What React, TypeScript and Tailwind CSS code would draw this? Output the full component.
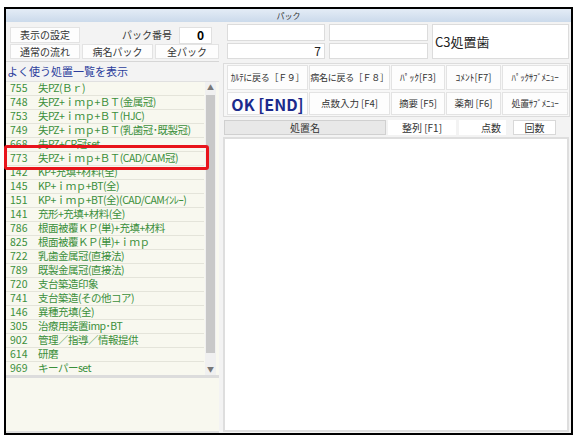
const items: [string, string][] = [
  ["755", "失PZ(Ｂｒ)"],
  ["748", "失PZ+ｉｍｐ+ＢＴ(金属冠)"],
  ["753", "失PZ+ｉｍｐ+ＢＴ(HJC)"],
  ["749", "失PZ+ｉｍｐ+ＢＴ(乳歯冠･既製冠)"],
  ["668", "失PZ+CR冠set"],
  ["773", "失PZ+ｉｍｐ+ＢＴ(CAD/CAM冠)"],
  ["142", "KP+充填+材料(全)"],
  ["145", "KP+ｉｍｐ+BT(全)"],
  ["151", "KP+ｉｍｐ+BT(全)(CAD/CAMｲﾝﾚｰ)"],
  ["141", "充形+充填+材料(全)"],
  ["786", "根面被覆ＫＰ(単)+充填+材料"],
  ["825", "根面被覆ＫＰ(単)+ｉｍｐ"],
  ["722", "乳歯金属冠(直接法)"],
  ["789", "既製金属冠(直接法)"],
  ["720", "支台築造印象"],
  ["741", "支台築造(その他コア)"],
  ["146", "異種充填(全)"],
  ["305", "治療用装置imp･BT"],
  ["902", "管理／指導／情報提供"],
  ["614", "研磨"],
  ["969", "キーパーset"],
];

function Btn({ children, w, h, className = "" }: { children: React.ReactNode; w: string; h: string; className?: string }) {
  return (
    <div className={`${w} ${h} shrink-0 border border-[#e3e3e3] bg-[#fdfdfd] flex items-center justify-center text-[#333] whitespace-nowrap overflow-hidden ${className}`}>
      {children}
    </div>
  );
}

export default function App() {
  return (
    <div className="w-[579px] h-[443px] bg-white pl-[4px] pt-[7px] font-['Noto_Sans_CJK_JP',sans-serif] leading-none">
      <div className="w-[569px] h-[428px] border-2 border-black flex flex-col bg-[#f3f3f3]">
        <div className="h-[13px] shrink-0 bg-gradient-to-b from-[#e4ecf6] to-[#cbdaeb] flex items-center justify-center text-[8px] text-[#333]">
          パック
        </div>
        <div className="flex flex-1 gap-[3px] min-h-0">
          {/* Left column */}
          <div className="w-[213px] flex flex-col relative">
            <div className="h-[40px] shrink-0 pl-[4px] pt-[5px] border-b border-[#d6d6d6] flex flex-col gap-[1px]">
              <div className="flex h-[16px] items-center">
                <Btn w="w-[70px]" h="h-[16px]" className="text-[10px]">表示の設定</Btn>
                <div className="w-[92px] text-right text-[10px] text-[#333]">パック番号</div>
                <div className="ml-[7px] w-[33px] h-[17px] border border-[#e0e0e0] bg-white flex items-center justify-end pr-[7px] text-[12px] font-bold text-black">0</div>
              </div>
              <div className="flex h-[15px] items-center gap-[2px]">
                <Btn w="w-[70px]" h="h-[15px]" className="text-[10px]">通常の流れ</Btn>
                <Btn w="w-[71px]" h="h-[15px]" className="text-[10px]">病名パック</Btn>
                <Btn w="w-[64px]" h="h-[15px]" className="text-[10px]">全パック</Btn>
              </div>
            </div>
            <div className="h-[19px] shrink-0 flex items-center pl-[1px] text-[11px] text-[#2b3d9c]">
              よく使う処置一覧を表示
            </div>
            <div className="h-[294px] shrink-0 flex bg-[#f8f8ef] border-t border-[#e0e0e0] overflow-hidden">
              <div className="w-[198px] flex flex-col">
                {items.map(([n, t]) => (
                  <div key={n} className="h-[14px] shrink-0 flex items-center border-b border-[#e4e4da] text-[10.5px] text-[#3b8f3b] whitespace-nowrap">
                    <span className="w-[32px] pl-[4px]">{n}</span>
                    <span className="tracking-[-0.5px]">{t}</span>
                  </div>
                ))}
              </div>
              <div className="w-[11px] ml-[1px] bg-[#f0f0f0] flex flex-col items-center">
                <div className="h-[11px] w-full flex items-center justify-center text-[7px] text-[#777]">▲</div>
                <div className="w-[9px] h-[258px] bg-[#c8c8c8] mt-[2px]"></div>
                <div className="flex-1"></div>
                <div className="h-[11px] w-full flex items-center justify-center text-[7px] text-[#777]">▼</div>
              </div>
            </div>
            <div className="h-[3px] shrink-0 bg-[#dcdcdc]"></div>
            <div className="flex-1 bg-[#f8f8ef] border-b-2 border-[#dedede]"></div>
            <div className="absolute left-[-2px] top-[123px] w-[205px] h-[25px] border-[3px] border-[#e8141b] rounded-[3px]"></div>
          </div>

          {/* Right column */}
          <div className="w-[349px] flex flex-col">
            <div className="shrink-0 pt-[2px] pl-[5px] flex gap-[4px]">
              <div className="flex flex-col gap-[2px]">
                <div className="flex gap-[4px]">
                  <div className="w-[98px] h-[17px] border border-[#dcdcdc] bg-white"></div>
                  <div className="w-[99px] h-[17px] border border-[#dcdcdc] bg-white"></div>
                </div>
                <div className="flex gap-[4px]">
                  <div className="w-[98px] h-[16px] border border-[#dcdcdc] bg-white flex items-center justify-end pr-[3px] text-[12px] text-[#222]">7</div>
                  <div className="w-[99px] h-[16px] border border-[#dcdcdc] bg-white"></div>
                </div>
              </div>
              <div className="w-[137px] h-[35px] border border-[#dcdcdc] bg-white flex items-center pl-[2px] text-[13px] text-[#222]">
                C3処置歯
              </div>
            </div>
            <div className="mt-[4px] ml-[1px] w-[347px] h-[54px] shrink-0 border border-[#dcdcdc] bg-[#f7f7f7] pl-[3px] pt-[1px] flex flex-col gap-[2px]">
              <div className="flex gap-[1px]">
                <Btn w="w-[81px]" h="h-[25px]" className="text-[9px] tracking-[-0.3px]">ｶﾙﾃに戻る［Ｆ９］</Btn>
                <Btn w="w-[81px]" h="h-[25px]" className="text-[9px] tracking-[-0.3px]">病名に戻る［Ｆ８］</Btn>
                <Btn w="w-[54px]" h="h-[25px]" className="text-[9.5px]">ﾊﾟｯｸ[F3]</Btn>
                <Btn w="w-[55px]" h="h-[25px]" className="text-[9.5px]">ｺﾒﾝﾄ[F7]</Btn>
                <Btn w="w-[66px]" h="h-[25px]" className="text-[9px] tracking-[-0.3px]">ﾊﾟｯｸｻﾌﾞﾒﾆｭｰ</Btn>
              </div>
              <div className="flex gap-[1px]">
                <Btn w="w-[81px]" h="h-[23px]" className="text-[16px] font-bold !text-[#1b2a8c]">OK [END]</Btn>
                <Btn w="w-[81px]" h="h-[23px]" className="text-[9.5px]">点数入力 [F4]</Btn>
                <Btn w="w-[54px]" h="h-[23px]" className="text-[9.5px]">摘要 [F5]</Btn>
                <Btn w="w-[55px]" h="h-[23px]" className="text-[9.5px]">薬剤 [F6]</Btn>
                <Btn w="w-[66px]" h="h-[23px]" className="text-[9px] tracking-[-0.3px]">処置ｻﾌﾞﾒﾆｭｰ</Btn>
              </div>
            </div>
            <div className="mt-[3px] h-[15px] shrink-0 flex pl-[2px] text-[10px] text-[#333]">
              <div className="w-[162px] h-full border border-[#d0d0d0] bg-[#e8e8e8] flex items-center justify-center">処置名</div>
              <div className="ml-[2px] w-[68px] h-full bg-white flex items-center justify-center">整列 [F1]</div>
              <div className="ml-[3px] w-[47px] h-full bg-white flex items-center justify-end pr-[5px]">点数</div>
              <div className="ml-[7px] w-[43px] h-full border border-[#d8d8d8] bg-white flex items-center justify-center">回数</div>
            </div>
            <div className="mt-[2px] ml-[1px] mr-[2px] mb-[1px] flex-1 bg-white border-2 border-[#dedede]"></div>
          </div>
        </div>
      </div>
    </div>
  );
}
